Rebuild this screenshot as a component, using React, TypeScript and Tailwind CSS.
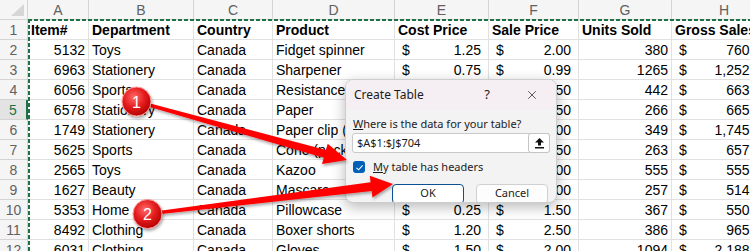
import React from "react";
import { X } from "lucide-react";

const grid = "grid grid-cols-[28px_61px_105px_79px_122px_94px_90px_93px_105px]";

const letters = ["A", "B", "C", "D", "E", "F", "G", "H"];
const headers = ["Item#", "Department", "Country", "Product", "Cost Price", "Sale Price", "Units Sold", "Gross Sales"];
const kinds = ["num", "text", "text", "text", "acc", "acc", "num", "acc"];

const rows = [
    ["5132", "Toys", "Canada", "Fidget spinner", "1.25", "2.00", "380", "760.00"],
    ["6963", "Stationery", "Canada", "Sharpener", "0.75", "0.99", "1265", "1,252.35"],
    ["6056", "Sports", "Canada", "Resistance band", "1.00", "1.50", "442", "663.00"],
    ["6578", "Stationery", "Canada", "Paper", "1.25", "2.50", "266", "665.00"],
    ["1749", "Stationery", "Canada", "Paper clip (box)", "2.00", "5.00", "349", "1,745.00"],
    ["5625", "Sports", "Canada", "Cone (pack)", "1.00", "2.50", "263", "657.50"],
    ["2565", "Toys", "Canada", "Kazoo", "0.50", "1.00", "555", "555.00"],
    ["1627", "Beauty", "Canada", "Mascara", "0.75", "2.00", "257", "514.00"],
    ["5353", "Home", "Canada", "Pillowcase", "0.25", "1.50", "367", "550.50"],
    ["8492", "Clothing", "Canada", "Boxer shorts", "1.20", "2.50", "386", "965.00"],
    ["6031", "Clothing", "Canada", "Gloves", "1.50", "2.00", "1094", "2,188.00"],
];

// tapered arrow polygon, computed from start/tip
function arrowPoints(sx: number, sy: number, tx: number, ty: number, L: number, W: number, w0: number, w1: number) {
    const dx = tx - sx, dy = ty - sy;
    const len = Math.hypot(dx, dy);
    const ux = dx / len, uy = dy / len;
    const nx = -uy, ny = ux;
    const bx = tx - ux * L, by = ty - uy * L;
    const pts = [
        [sx + nx * w0, sy + ny * w0],
        [bx + nx * w1, by + ny * w1],
        [bx + nx * W, by + ny * W],
        [tx, ty],
        [bx - nx * W, by - ny * W],
        [bx - nx * w1, by - ny * w1],
        [sx - nx * w0, sy - ny * w0],
    ];
    return pts.map(p => p.map(v => v.toFixed(1)).join(",")).join(" ");
}

function Cell({ kind, value, bold }: { kind: string; value: string; bold?: boolean }) {
    const base = "h-[20px] border-r border-b border-[#e1e1e1] flex items-center overflow-hidden whitespace-nowrap pt-[1px] text-[14px] text-black";
    if (bold) return <div className={`${base} px-[3px] font-bold`}>{value}</div>;
    if (kind === "num") return <div className={`${base} justify-end px-[3px]`}>{value}</div>;
    if (kind === "acc")
        return (
            <div className={`${base} justify-between pl-[7px] pr-[7px]`}>
                <span>$</span>
                <span>{value}</span>
            </div>
        );
    return <div className={`${base} px-[3px]`}>{value}</div>;
}

function Sheet() {
    return (
        <div className="font-['Liberation_Sans',Arial,sans-serif]">
            {/* column letters */}
            <div className={grid}>
                <div className="h-[20px] bg-[#f5f5f5] border-r border-b border-[#d4d4d4] flex items-end justify-end pr-[3px] pb-[3px]">
                    <svg width="13" height="12" viewBox="0 0 13 12">
                        <polygon points="13,0 13,12 0,12" fill="#d6d6d6" />
                    </svg>
                </div>
                {letters.map(l => (
                    <div key={l} className="h-[20px] bg-[#f5f5f5] border-r border-b border-[#d4d4d4] flex items-center justify-center pt-[2px] text-[14px] text-[#616161]">
                        {l}
                    </div>
                ))}
            </div>

            {/* header row */}
            <div className={grid}>
                <div className="h-[20px] bg-[#f5f5f5] border-r border-b border-[#d4d4d4] flex items-center justify-center pt-[1px] text-[14px] text-[#616161]">1</div>
                {headers.map(h => (
                    <Cell key={h} kind="text" value={h} bold />
                ))}
            </div>

            {rows.map((r, i) => {
                const n = i + 2;
                const active = n === 5;
                return (
                    <div key={n} className={grid}>
                        <div
                            className={`h-[20px] border-b flex items-center justify-center pt-[1px] text-[14px] ${
                                active
                                    ? "bg-[#e3e3e3] border-r-2 border-r-[#1e7145] border-b-[#d4d4d4] text-[#1e7145]"
                                    : "bg-[#f5f5f5] border-r border-[#d4d4d4] text-[#616161]"
                            }`}
                        >
                            {n}
                        </div>
                        {r.map((v, j) => (
                            <Cell key={j} kind={kinds[j]} value={v} />
                        ))}
                    </div>
                );
            })}
        </div>
    );
}

function CreateTableDialog() {
    return (
        <div className="absolute left-[345px] top-[79px] w-[212px] h-[124px] rounded-[8px] border border-[#cdcdcd] bg-[#f3f3f3] shadow-[0_4px_14px_rgba(0,0,0,0.28)] overflow-hidden font-['Noto_Sans',sans-serif] text-[11px] text-[#1b1b1b]">
            {/* title bar */}
            <div className="h-[29px] bg-[#f5eef3] flex items-center pl-[8px]">
                <span className="text-[12px]">Create Table</span>
                <div className="ml-auto flex items-center">
                    <span className="w-[20px] text-center text-[13px]">?</span>
                    <span className="w-[20px] ml-[25px] mr-[14px] flex justify-center">
                        <X size={14} strokeWidth={1.2} />
                    </span>
                </div>
            </div>

            <div className="px-[6px] pt-[7px]">
                <div className="leading-[16px] pl-[1px]">
                    <span className="underline">W</span>here is the data for your table?
                </div>

                <div className="mt-[1px] h-[20px] bg-white border border-[#c9c9c9] rounded-[3px] flex items-center pl-[4px]">
                    <span className="text-[11px]">$A$1:$J$704</span>
                    <div className="ml-auto mr-[-1px] h-[20px] w-[22px] border border-[#c4c4c4] rounded-[3px] bg-white flex items-center justify-center">
                        <svg width="11" height="12" viewBox="0 0 11 12">
                            <path d="M5.5 1 L10 5.5 L7 5.5 L7 8.5 L4 8.5 L4 5.5 L1 5.5 Z" fill="#111" />
                            <rect x="1" y="10" width="9" height="1.5" fill="#111" />
                        </svg>
                    </div>
                </div>

                <div className="mt-[6px] flex items-center pl-[1px]">
                    <div className="w-[12px] h-[12px] rounded-[3px] bg-[#005fb8] flex items-center justify-center">
                        <svg width="9" height="9" viewBox="0 0 9 9">
                            <path d="M1.5 4.8 L3.6 6.8 L7.6 2.3" fill="none" stroke="white" strokeWidth="1.1" />
                        </svg>
                    </div>
                    <span className="ml-[8px]">
                        <span className="underline">M</span>y table has headers
                    </span>
                </div>

                <div className="mt-[8px] flex justify-end gap-[12px] mr-[2px]">
                    <button className="w-[72px] h-[20px] rounded-[4px] bg-white border-[1.5px] border-[#0b4f94] flex items-center justify-center">
                        OK
                    </button>
                    <button className="w-[72px] h-[20px] rounded-[4px] bg-[#fdfdfd] border border-[#d0d0d0] flex items-center justify-center">
                        Cancel
                    </button>
                </div>
            </div>
        </div>
    );
}

function Callouts() {
    const a1 = arrowPoints(136.5, 101.5, 347, 160, 23, 10.5, 1.5, 4);
    const a2 = arrowPoints(147.5, 214, 393, 184, 22, 11, 1.5, 4.5);
    return (
        <svg className="absolute inset-0 pointer-events-none" width="750" height="251" viewBox="0 0 750 251">
            <defs>
                <filter id="shadow" x="-20%" y="-20%" width="140%" height="140%">
                    <feDropShadow dx="1" dy="2" stdDeviation="1.5" floodColor="#000" floodOpacity="0.35" />
                </filter>
                <radialGradient id="ball" cx="42%" cy="35%" r="65%">
                    <stop offset="0%" stopColor="#ff6a6a" />
                    <stop offset="55%" stopColor="#e51d1d" />
                    <stop offset="100%" stopColor="#b30000" />
                </radialGradient>
            </defs>
            <g filter="url(#shadow)">
                <polygon points={a1} fill="#ff0000" />
                <polygon points={a2} fill="#ff0000" />
            </g>
            <g filter="url(#shadow)">
                <circle cx="136.5" cy="101.5" r="14.5" fill="url(#ball)" stroke="#ff9c9c" strokeWidth="1" />
                <circle cx="147.5" cy="214" r="14.5" fill="url(#ball)" stroke="#ff9c9c" strokeWidth="1" />
            </g>
            <text x="136.5" y="102" textAnchor="middle" dominantBaseline="central" fill="white" fontSize="16" fontFamily="Liberation Sans, Arial, sans-serif">1</text>
            <text x="147.5" y="214.5" textAnchor="middle" dominantBaseline="central" fill="white" fontSize="16" fontFamily="Liberation Sans, Arial, sans-serif">2</text>
        </svg>
    );
}

export default function App() {
    return (
        <div className="relative w-[750px] h-[251px] overflow-hidden bg-white">
            <Sheet />

            {/* copy selection marching ants */}
            <svg className="absolute inset-0 pointer-events-none" width="750" height="251" viewBox="0 0 750 251">
                <line x1="28" y1="20" x2="750" y2="20" stroke="#1e7145" strokeWidth="2" strokeDasharray="4 2" />
                <line x1="29" y1="19" x2="29" y2="251" stroke="#1e7145" strokeWidth="2" strokeDasharray="4 2" />
            </svg>

            <CreateTableDialog />
            <Callouts />
        </div>
    );
}
